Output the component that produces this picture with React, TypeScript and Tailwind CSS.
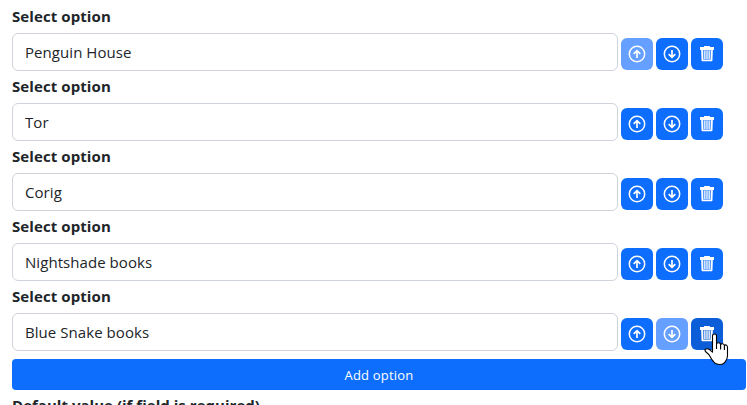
import React from 'react';

const LABEL = 'block h-6 whitespace-nowrap text-[15px] leading-[22px] font-bold text-[#212529]';

function ArrowCircle({ down = false }: { down?: boolean }) {
  return (
    <svg width="18" height="18" viewBox="0 0 18 18" fill="none" stroke="white" strokeWidth="1.5" className={down ? 'rotate-180' : ''}>
      <circle cx="9" cy="9" r="7.7" />
      <path d="M9 13V5.8M5.7 8.8 9 5.6l3.3 3.2" strokeWidth="1.7" />
    </svg>
  );
}

function Trash() {
  return (
    <svg width="18" height="18" viewBox="0 0 18 18" fill="none" stroke="white">
      <path d="M6.7 2.2V1.5h4.6v.7" strokeWidth="1.2" />
      <path d="M2 2h14v3H2z" fill="white" stroke="none" />
      <path d="M4 4.5 4.4 15.5H13.6L14 4.5" fill="white" fillOpacity="0.3" strokeWidth="1.7" strokeLinejoin="round" />
      <path d="M6.8 5.5v8.5M9 5.5v8.5M11.2 5.5v8.5" strokeWidth="1.1" />
    </svg>
  );
}

function IconButton({ label, tone, children }: { label: string; tone: string; children: React.ReactNode }) {
  return (
    <button aria-label={label} className={`flex size-8 items-center justify-center rounded-md ${tone}`}>
      {children}
    </button>
  );
}

function HandPointer() {
  return (
    <svg className="absolute top-[15px] left-[82px] z-10" width="27" height="34" viewBox="0 0 27 34">
      <path
        d="M9.5 3Q9.5 1 11.5 1T13.5 3V11Q14 9.5 15.8 9.8T17.6 11.8Q18.2 10.4 19.8 10.8T21.4 12.8Q22.1 11.6 23.2 12T24.5 14.2V22.5Q24.5 25.5 23 27.5 21.2 31.3 17 31.5 12.5 31.5 10.5 28.5 8.5 26.5 7.2 23.7 5.8 21 3 19 1.2 17.3 2.5 16.2 4.3 15 6.8 16.8L9.5 19.2Z"
        fill="white"
        stroke="black"
        strokeWidth="1.1"
        strokeLinejoin="round"
      />
      <path d="M13.5 11v5M17.6 12v4.5M21.4 13v4" stroke="black" strokeWidth="1.1" />
    </svg>
  );
}

const options = ['Penguin House', 'Tor', 'Corig', 'Nightshade books', 'Blue Snake books'];

export default function App() {
  const last = options.length - 1;
  return (
    <main className="h-[405px] w-[747px] overflow-hidden bg-white pt-[5px] pr-px pl-3 font-['Open_Sans','Noto_Sans',sans-serif]">
      <div className="flex flex-col gap-1">
        {options.map((name, i) => (
          <div key={name} className="flex flex-col gap-1">
            <span className={`tracking-[0.09px] ${LABEL}`}>Select option</span>
            <div className="flex h-[38px] items-end gap-[3px]">
              <div className="flex h-[38px] w-[606px] items-center rounded-md border border-[#ced4da] px-3 text-[15px] tracking-[0.06px] text-[#212529]">
                {name}
              </div>
              <div className="relative flex translate-y-px gap-[3px] pb-0.5">
                <IconButton label="Move up" tone={i === 0 ? 'bg-[#659fff]' : 'bg-[#0d6efd]'}>
                  <ArrowCircle />
                </IconButton>
                <IconButton label="Move down" tone={i === last ? 'bg-[#659fff]' : 'bg-[#0d6efd]'}>
                  <ArrowCircle down />
                </IconButton>
                <IconButton label="Delete" tone={i === last ? 'bg-[#0b5ed7]' : 'bg-[#0d6efd]'}>
                  <Trash />
                </IconButton>
                {i === last && <HandPointer />}
              </div>
            </div>
          </div>
        ))}
      </div>
      <button className="mt-2 flex h-[31px] w-full items-center justify-center rounded-[4px] bg-[#0d6efd] pt-0.5 text-[13px] font-medium tracking-[0.2px] text-white">
        Add option
      </button>
      <span className={`mt-1 tracking-[0.03px] ${LABEL}`}>Default value (if field is required)</span>
    </main>
  );
}
